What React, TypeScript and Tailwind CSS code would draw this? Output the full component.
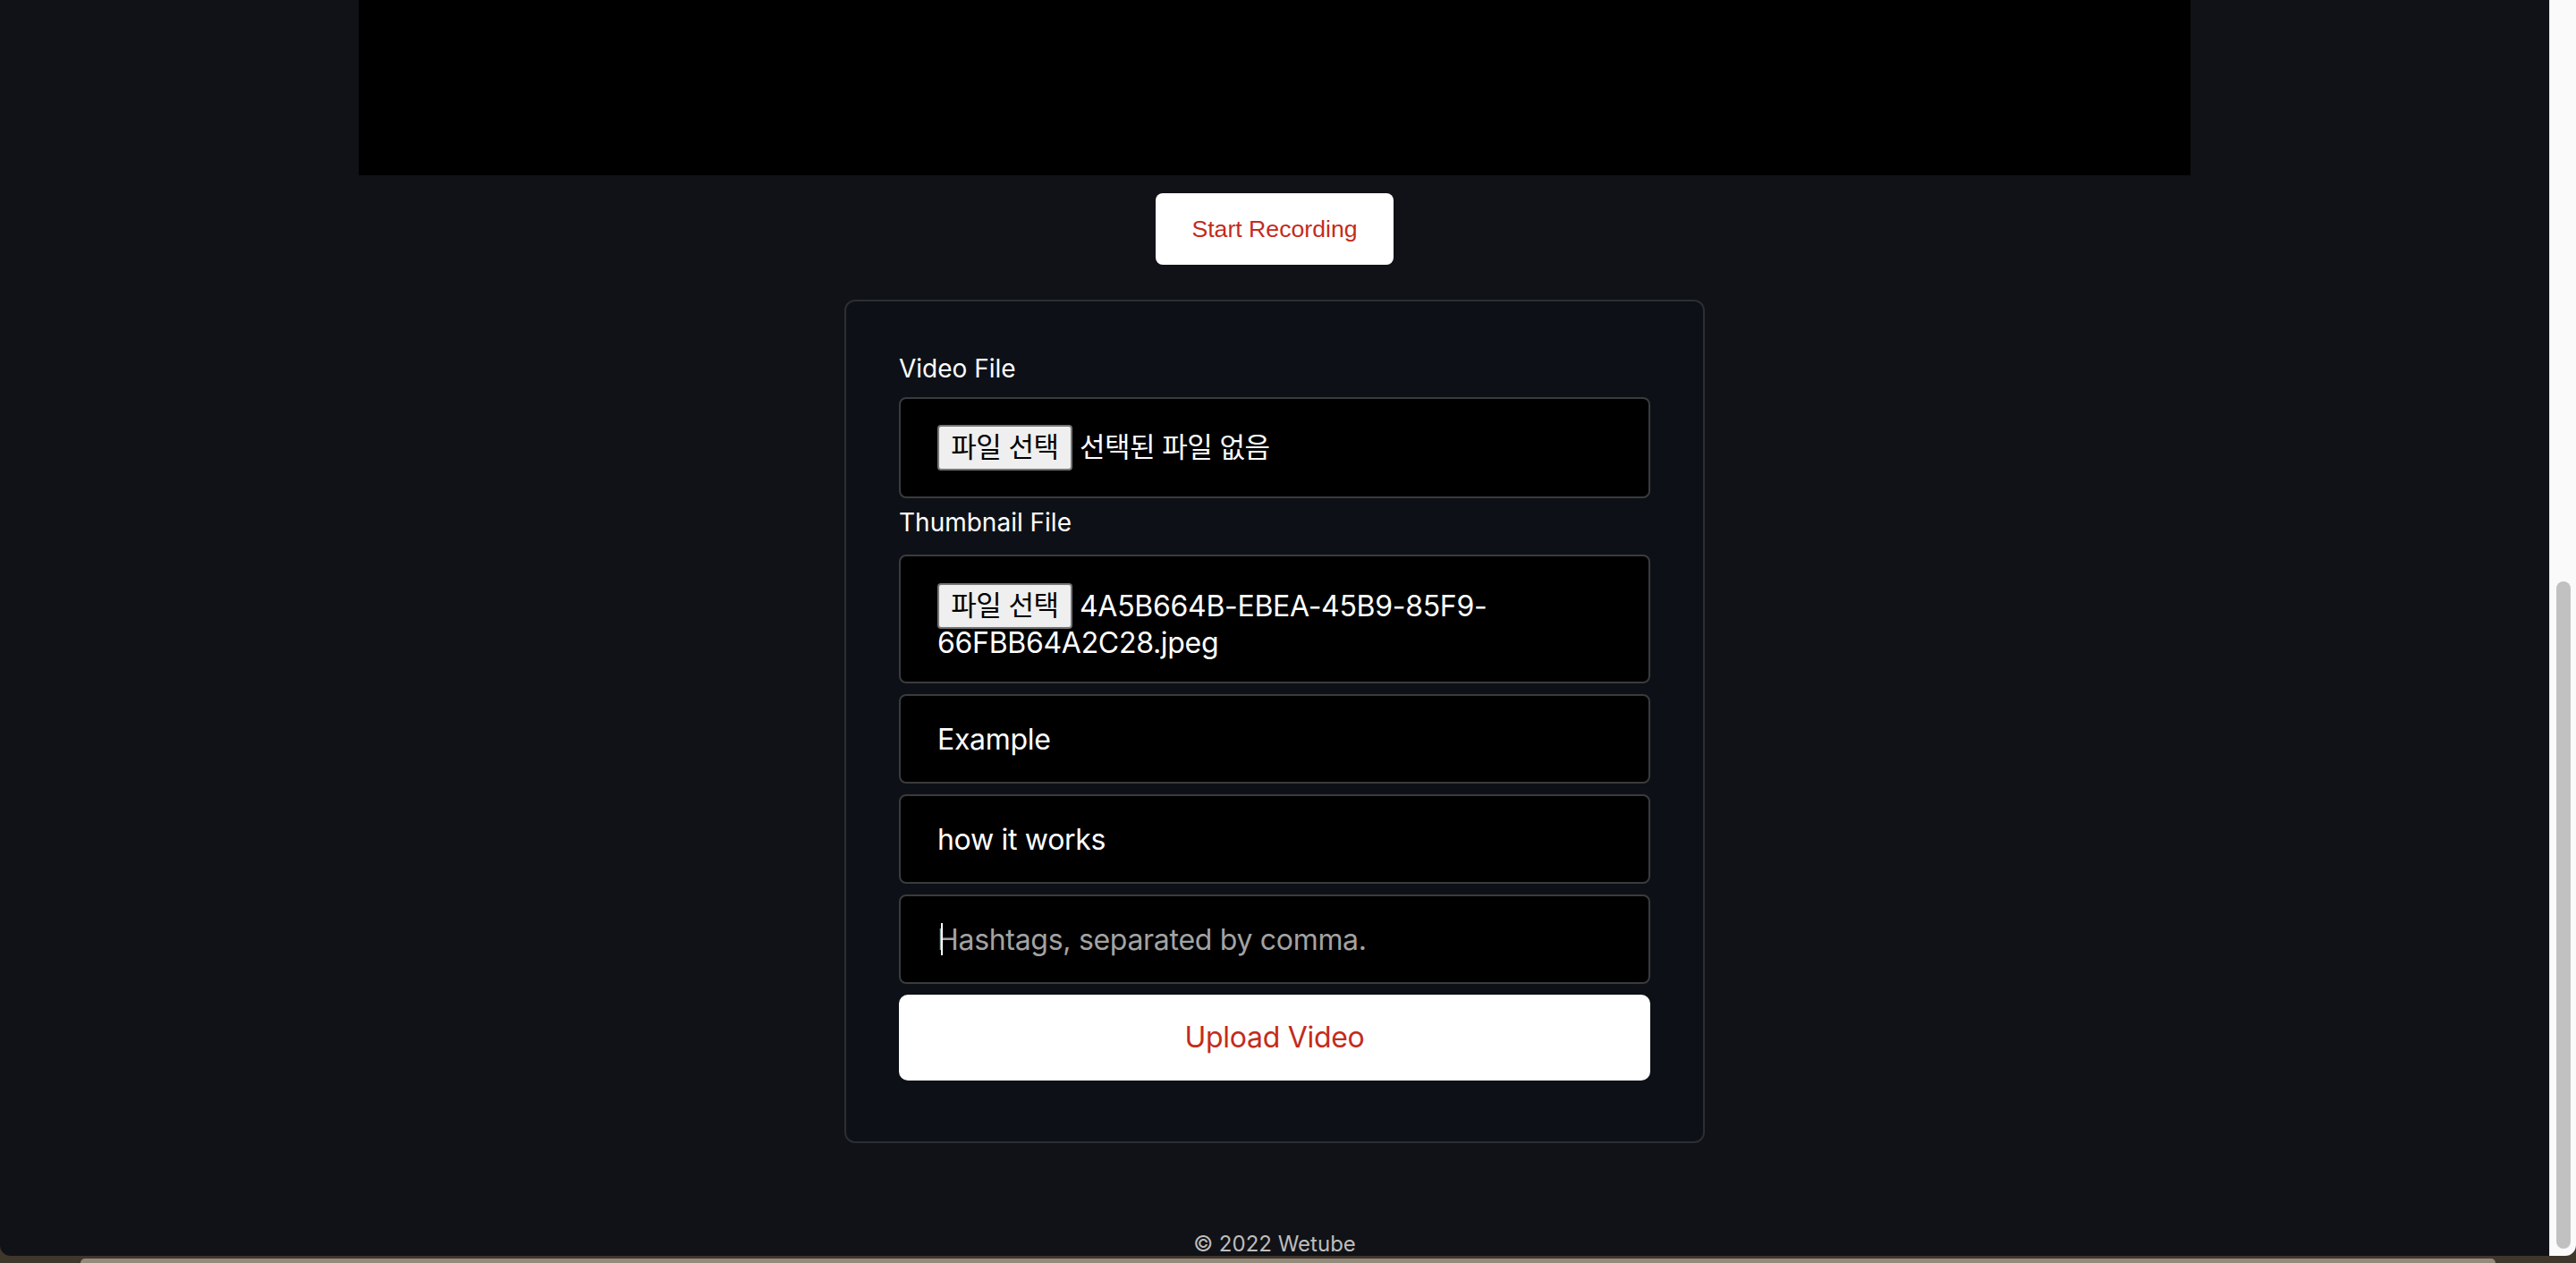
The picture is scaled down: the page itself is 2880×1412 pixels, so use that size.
import React from 'react'

const sans = "font-['Inter','Noto_Sans_CJK_KR',sans-serif]"

function FileButton() {
  return (
    <span className="inline-flex h-[51px] w-[151px] shrink-0 items-center justify-center rounded-[4px] border-2 border-[#767676] bg-[#efefef] text-[31px] tracking-[-0.5px] text-black">
      파일 선택
    </span>
  )
}

function TextField({ value, placeholder, caret }: { value?: string; placeholder?: string; caret?: boolean }) {
  return (
    <div className="relative mt-[12px]">
      <input
        defaultValue={value}
        placeholder={placeholder}
        className="block h-[100px] w-full rounded-[8px] border-2 border-[#3a3b3d] bg-black px-[41px] text-[32px] tracking-[-0.3px] text-white outline-none placeholder:text-[#a3a3a3]"
      />
      {caret && <span className="absolute left-[47px] top-[32px] h-[36px] w-[2px] bg-white" />}
    </div>
  )
}

export default function App() {
  return (
    <div className={`h-[1412px] w-full overflow-hidden bg-[#3f362c] ${sans}`}>
      {/* window */}
      <div className="flex h-[1404px] overflow-hidden rounded-b-[12px]">
        <main className="flex flex-1 flex-col items-center overflow-hidden bg-[#111217]">
          {/* video preview */}
          <div className="h-[196px] w-[2048px] shrink-0 bg-black" />

          <button className="mt-[20px] h-[80px] shrink-0 rounded-[8px] bg-white px-[40px] font-['Liberation_Sans',Arial,sans-serif] text-[26.67px] text-[#c42b1c]">
            Start Recording
          </button>

          {/* upload form */}
          <form className="mt-[39px] w-[962px] shrink-0 rounded-[12px] border-2 border-[#2b2e33] bg-[#0d1117] px-[59px] pt-[58px] pb-[68px]">
            <label className="block h-[34px] text-[28px] leading-[34px] text-white">Video File</label>
            <div className="mt-[15px] flex h-[113px] items-center rounded-[8px] border-2 border-[#3a3b3d] bg-black px-[41px] text-[32px] text-white">
              <FileButton />
              <span className="ml-[8px] text-[31px] tracking-[-0.5px]">선택된 파일 없음</span>
            </div>

            <label className="mt-[10px] block h-[34px] text-[28px] leading-[34px] text-white">Thumbnail File</label>
            <div className="mt-[19px] h-[144px] rounded-[8px] border-2 border-[#3a3b3d] bg-black px-[41px] pt-[30px] text-[32px] tracking-[-0.3px] text-white">
              <div className="flex items-center">
                <FileButton />
                <span className="ml-[8px]">4A5B664B-EBEA-45B9-85F9-</span>
              </div>
              <div className="-mt-[4px] leading-[39px]">66FBB64A2C28.jpeg</div>
            </div>

            <TextField value="Example" />
            <TextField value="how it works" />
            <TextField placeholder="Hashtags, separated by comma." caret />

            <button
              type="button"
              className="mt-[12px] flex h-[96px] w-full items-center justify-center rounded-[10px] bg-white text-[32px] tracking-[-0.3px] text-[#c42b1c]"
            >
              Upload Video
            </button>
          </form>

          <footer className="mt-[101px] shrink-0 text-[24px] leading-[24px] text-[#bdbdbd]">© 2022 Wetube</footer>
        </main>

        {/* scrollbar */}
        <div className="flex w-[30px] shrink-0 flex-col border-l border-[#e6e6e6] bg-[#fafafa] pr-[3px] pl-[7px]">
          <div className="mt-[650px] h-[746px] w-[16px] rounded-full bg-[#c1c1c1]" />
        </div>
      </div>

      {/* desktop edge below window */}
      <div className="mx-[90px] mt-[3px] h-[5px] rounded-t-[10px] bg-[#958b7c]" />
    </div>
  )
}
